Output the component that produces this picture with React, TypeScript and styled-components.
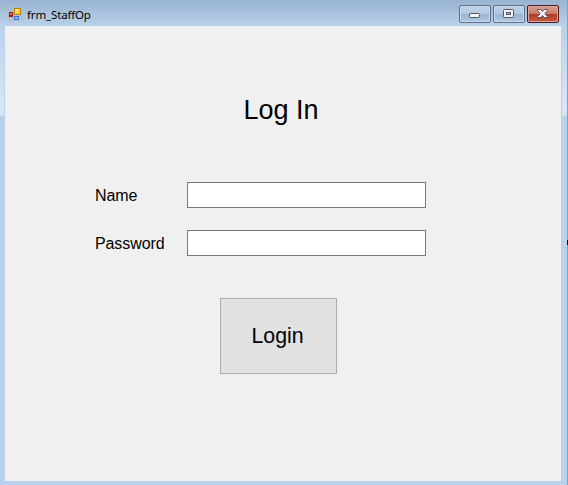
import React from "react";
import styled, { createGlobalStyle } from "styled-components";

const GlobalStyle = createGlobalStyle`
  * { box-sizing: border-box; }
  html, body { margin: 0; padding: 0; overflow: hidden; }
`;

const Desktop = styled.div`
  width: 568px;
  height: 485px;
  padding-right: 1px;
  background: linear-gradient(#000, #000) right 240px / 1px 5px no-repeat, #3fbfe0;
`;

const WindowFrame = styled.div`
  display: flex;
  flex-direction: column;
  width: 567px;
  height: 485px;
  padding: 0 6px 4px 5px;
  background:
    linear-gradient(#99b4d1, #b9d1ea) 0 0 / 100% 26px no-repeat,
    linear-gradient(#b9d1ea, #dae6f5 88%, #d5e3f3) 0 26px / 4px 90px no-repeat,
    linear-gradient(#b9d1ea, #dae6f5 88%, #d5e3f3) 562px 26px / 5px 90px no-repeat,
    #b9d1ea;
`;

const TitleBar = styled.header`
  display: flex;
  align-items: flex-start;
  height: 26px;
  padding: 5px 2px 0 3px;
`;

const AppIcon = styled.svg`
  width: 14px;
  height: 16px;
  margin: 0 5px 0 0;
`;

const Caption = styled.div`
  flex: 1;
  padding-top: 1px;
  font: 11.5px/18px "Noto Sans", "Open Sans", sans-serif;
  letter-spacing: -0.15px;
  color: #000;
`;

const CaptionButtons = styled.div`
  display: flex;
  gap: 2px;
`;

const CaptionButton = styled.button<{ $close?: boolean }>`
  display: flex;
  width: 32px;
  height: 18px;
  padding: 0;
  border: 1px solid ${(p) => (p.$close ? "#4c1a25" : "#5e6f88")};
  border-radius: 2px;
  box-shadow: inset 0 0 0 1px ${(p) => (p.$close ? "#dfa69c" : "#c8d9eb")};
  background: ${(p) =>
    p.$close
      ? "linear-gradient(#d8998c 0 10%, #cb7766 48%, #b53a24 50%, #c55b40 100%)"
      : "linear-gradient(#bcd0e5 0 10%, #b2c9e1 48%, #98b3d0 50%, #b1cae4 100%)"};
`;

const Glyph = styled.svg`
  width: 30px;
  height: 16px;
`;

const Client = styled.main`
  display: flex;
  flex-direction: column;
  align-items: flex-start;
  width: 556px;
  height: 455px;
  background: #f0f0f0;
  font-family: "Liberation Sans", Arial, sans-serif;
  color: #000;
`;

const Heading = styled.h1`
  margin: 68px 0 0 238.5px;
  font-size: 27px;
  line-height: 32px;
  font-weight: 400;
`;

const Fields = styled.div`
  display: grid;
  grid-template-columns: 92px 239px;
  row-gap: 22px;
  margin: 56px 0 0 90px;
`;

const Label = styled.label`
  font-size: 16px;
  line-height: 27px;
  height: 26px;
  letter-spacing: -0.1px;
`;

const TextBox = styled.input`
  width: 239px;
  height: 26px;
  padding: 2px 4px;
  border: 1px solid #7a7a7a;
  border-radius: 0;
  background: #fff;
  font: inherit;
  outline: none;
`;

const LoginButton = styled.button`
  width: 117px;
  height: 76px;
  margin: 42px 0 0 215px;
  padding: 0 2px 0 0;
  border: 1px solid #adadad;
  border-radius: 0;
  background: #e1e1e1;
  color: #000;
  font: 21.33px "Liberation Sans", Arial, sans-serif;
`;

export default function App() {
  return (
    <Desktop>
      <GlobalStyle />
      <WindowFrame>
        <TitleBar>
          <AppIcon viewBox="0 0 14 16" shapeRendering="crispEdges">
            <path d="M.5 2.500h13v13H.5zM5.500 2.500v13M.5 12.500h5" fill="none" stroke="#b5b9bf" />
            <rect x="1" y="7" width="4" height="5" fill="#a31b17" />
            <rect x="2" y="8" width="2" height="2" fill="#e47566" />
            <rect x="6" y="3" width="7" height="7" fill="#b98307" />
            <rect x="7" y="4" width="5" height="5" fill="#ffcf3c" />
            <rect x="7" y="4" width="3" height="2" fill="#ffe99a" />
            <rect x="6" y="11" width="5" height="4" fill="#3c6fcf" />
            <rect x="7" y="12" width="3" height="2" fill="#91b8f5" />
          </AppIcon>
          <Caption>frm_StaffOp</Caption>
          <CaptionButtons>
            <CaptionButton aria-label="Minimize">
              <Glyph viewBox="0 0 30 16">
                <rect x="9.500" y="7.500" width="10" height="4" rx="0.800" fill="#f3f3f3" stroke="#535766" />
              </Glyph>
            </CaptionButton>
            <CaptionButton aria-label="Maximize">
              <Glyph viewBox="0 0 30 16">
                <rect x="9.500" y="3.500" width="10" height="8" rx="0.800" fill="#f3f3f3" stroke="#535766" />
                <rect x="12.500" y="6.500" width="4" height="2" fill="#a9c0d9" stroke="#535766" />
              </Glyph>
            </CaptionButton>
            <CaptionButton $close aria-label="Close">
              <Glyph viewBox="0 0 30 16">
                <path
                  d="M9.500 3.500h3.300L14.500 5.500l1.700-2h3.300v1L16.900 7.500l2.600 3v1h-3.300l-1.700-2-1.700 2H9.500v-1l2.600-3-2.600-3z"
                  fill="#f3f3f3"
                  stroke="#535766"
                />
              </Glyph>
            </CaptionButton>
          </CaptionButtons>
        </TitleBar>
        <Client>
          <Heading>Log In</Heading>
          <Fields>
            <Label htmlFor="name">Name</Label>
            <TextBox id="name" />
            <Label htmlFor="password">Password</Label>
            <TextBox id="password" type="password" />
          </Fields>
          <LoginButton>Login</LoginButton>
        </Client>
      </WindowFrame>
    </Desktop>
  );
}
